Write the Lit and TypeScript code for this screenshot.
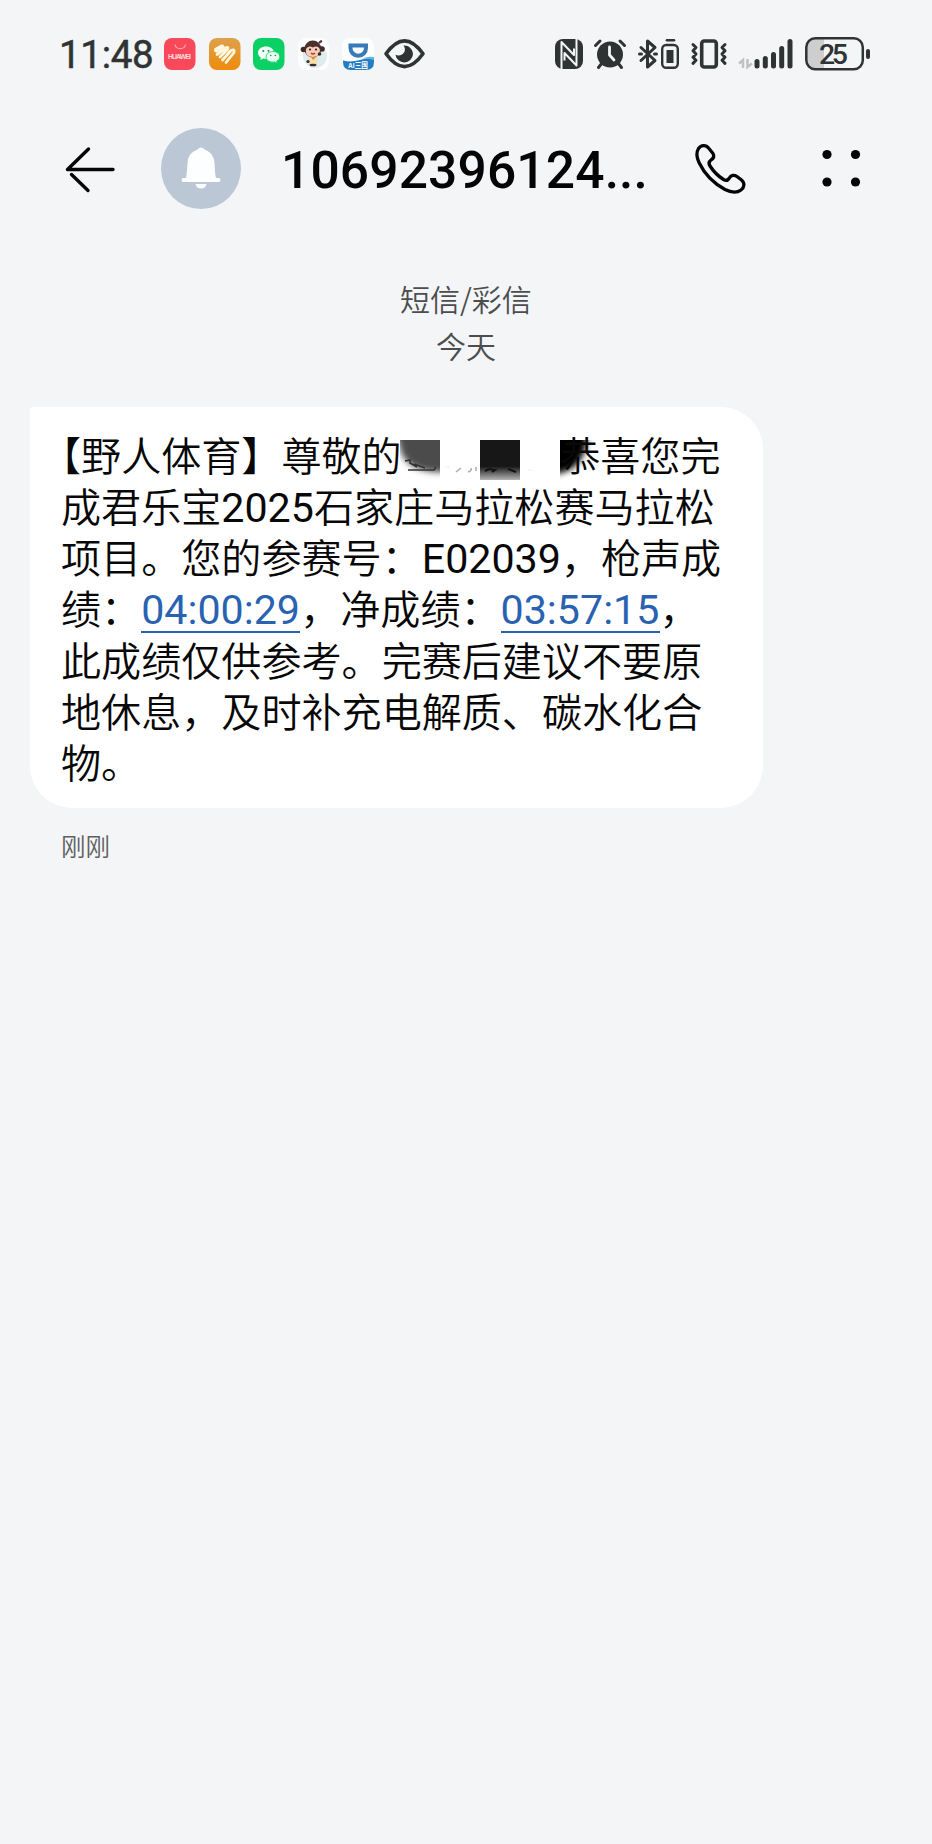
import { LitElement, html, css, svg } from "lit";
import { customElement } from "lit/decorators.js";

const INK = "#303334";

@customElement("status-bar")
class StatusBar extends LitElement {
  static styles = css`
    :host { display: flex; justify-content: space-between; height: 109px; padding: 0 62px 0 59px; box-sizing: border-box; color: #303334; }
    .group { display: flex; align-items: center; height: 108px; }
    .time { font: 400 38.5px/44px Roboto, sans-serif; width: 105px; letter-spacing: -0.3px; padding-top: 2px; -webkit-text-stroke: 0.5px #303334; }
    .apps { display: flex; gap: 12.5px; }
    svg { display: block; flex: none; overflow: visible; }
    .eye { margin-left: 10px; }
    .nfc { margin-right: 11px; }
    .alarm { margin-right: 12px; }
    .bt { margin-right: 11px; }
    .vib { margin-right: 12px; }
    .sig { margin-right: 12px; }
    .level { font: 500 28.5px Roboto, sans-serif; fill: #303334; }
    .tiny { font: 700 7px "Liberation Sans", sans-serif; fill: #ffd9d9; }
    .ai { font: 700 8px "Liberation Sans", "Noto Sans CJK SC", sans-serif; fill: #fff; }
  `;
  render() {
    return html`
      <div class="group">
        <div class="time">11:48</div>
        <div class="apps">
          <svg width="32" height="32" viewBox="0 0 32 32">
            <rect width="31.5" height="32" rx="8" fill="#f9485a" />
            <path d="M11 6.500c1 5.500 9.500 5.500 10.500 0" fill="none" stroke="#ffa6ac" stroke-width="1.200" />
            <text class="tiny" x="4" y="20.500" textLength="23">HUAWEI</text>
          </svg>
          <svg width="32" height="32" viewBox="0 0 32 32">
            <defs><linearGradient id="o" x1="0" y1="0" x2="0" y2="1"><stop offset="0" stop-color="#dca24c" /><stop offset="1" stop-color="#f08a0c" /></linearGradient></defs>
            <rect width="31.5" height="32" rx="8" fill="url(#o)" />
            <g fill="none" stroke="#fff8df" stroke-linecap="round" stroke-linejoin="round">
              <path d="M7.500 12L13 9" stroke-width="5" />
              <path d="M8 16.500L17.500 9.500Q20 9 18.500 11.500L11 19" stroke-width="2.800" />
              <path d="M13.500 22L22 12.500Q26 10.500 25 14.500L17 24.500" stroke-width="2.800" />
            </g>
          </svg>
          <svg width="32" height="32" viewBox="0 0 32 32">
            <rect width="31.5" height="32" rx="8" fill="#0bd066" />
            <path d="M13 8.500c-4.500 0-8 2.700-8 6.200 0 2 1.100 3.700 2.900 4.900l-.6 2.400 2.900-1.500c5 1.500 10.800-1 10.800-5.800 0-3.500-3.500-6.200-8-6.200z" fill="#f5fff8" />
            <path d="M20 13.500c-4 0-7 2.400-7 5.400 0 3.700 4.500 6 8.700 5l2.500 1.300-.5-2.100c1.900-1.100 3.100-2.500 3.100-4.200 0-3-3-5.400-6.800-5.400z" fill="#eafff2" stroke="#0bd066" stroke-width=".8" />
            <g fill="#198c51"><circle cx="10.300" cy="13" r="1" /><circle cx="15.500" cy="12.700" r="1" /><circle cx="17.800" cy="17.500" r=".8" /><circle cx="22.300" cy="17.500" r=".8" /></g>
          </svg>
          <svg width="32" height="32" viewBox="0 0 32 32">
            <rect width="31" height="32" rx="8" fill="#fcfdfd" />
            <circle cx="17" cy="18" r="12" fill="#dfecef" />
            <circle cx="5.500" cy="11.500" r="2.800" fill="#402a27" /><circle cx="24" cy="11" r="2.800" fill="#402a27" />
            <circle cx="14.800" cy="11" r="8.500" fill="#4c302b" />
            <path d="M21 5q3-3 2-1" stroke="#4c302b" stroke-width="2" />
            <path d="M8 11q3-4 6.800-1.500 4.500-2.500 7 1.500 1 8-7 8t-6.800-8z" fill="#f8cdb7" />
            <g fill="#29201f"><circle cx="12" cy="11.500" r="1.100" /><circle cx="18" cy="11.500" r="1.100" /></g>
            <path d="M13 15q2 2 4 0" stroke="#b43b34" stroke-width="1.400" fill="none" />
            <path d="M10 19h10l-1 7h-8z" fill="#f4dfad" /><path d="M13 19l2 3 3-3" fill="#d88a38" />
            <g fill="#3b2b29"><circle cx="10" cy="23.500" r="1.600" /><circle cx="21.500" cy="16" r="1.800" /><ellipse cx="15" cy="27" rx="3.500" ry="1.300" /></g>
          </svg>
          <svg width="32" height="32" viewBox="0 0 32 32">
            <rect width="32" height="32" rx="8" fill="#fcfdfe" />
            <path d="M8.500 7.500h15.500v2.500a7.700 7.700 0 0 1-15.500 0z" fill="none" stroke="#3a79b8" stroke-width="4" />
            <path d="M1 22.500q8 2 17-.5 8-2.500 14-2v4q0 8-8 8H9q-8 0-8-8z" fill="#247cc3" />
            <path d="M20 20.500q6-2.500 12-1.500v3q-6-2-12-1.500z" fill="#65b5e2" />
            <text class="ai" x="6" y="30" textLength="20" lengthAdjust="spacingAndGlyphs">AI三国</text>
          </svg>
        </div>
        <svg class="eye" width="41" height="30" viewBox="0 0 41 30">
          <path d="M2 14.800Q20.500-11 39 14.800 20.500 40.500 2 14.800z" fill="none" stroke="${INK}" stroke-width="3.600" stroke-linejoin="round" />
          <path d="M19.500 6.500c4.500-.5 9.500 3 9.500 8.800a8.800 8.800 0 0 1-17.500.5c3 1.500 7.500.5 9-3 .8-2.200.5-4.500-1-6.300z" fill="${INK}" />
        </svg>
      </div>
      <div class="group">
        <svg class="nfc" width="28" height="30" viewBox="0 0 28 30">
          <rect width="28" height="30" rx="8" fill="${INK}" />
          <g fill="none" stroke="#f3f5f7" stroke-width="2" stroke-linejoin="round">
            <path d="M6.500 30V3L19 16V9.500" /><path d="M21.500 0v26.500L9.500 14v7.500" />
          </g>
        </svg>
        <svg class="alarm" width="32" height="30" viewBox="0 0 32 30">
          <circle cx="16" cy="15.500" r="13" fill="${INK}" />
          <path d="M1.500 6.500L6 2M30.500 6.500L26 2M8 24l-3.500 4.500M24 24l3.500 4.500" stroke="${INK}" stroke-width="3" stroke-linecap="round" />
          <path d="M15.500 8v8l4.500 5" fill="none" stroke="#f3f5f7" stroke-width="2.800" stroke-linecap="round" stroke-linejoin="round" />
        </svg>
        <svg class="bt" width="42" height="30" viewBox="0 0 42 30">
          <path d="M3 8.500L17 21.500 9.500 28V2L17 8.500 3 21.500" fill="none" stroke="${INK}" stroke-width="3" stroke-linejoin="round" stroke-linecap="round" />
          <path d="M1.500 15h2M16.500 15h2" stroke="${INK}" stroke-width="3" stroke-linecap="round" />
          <rect x="24.200" y="6" width="15.600" height="22.700" rx="4" fill="none" stroke="${INK}" stroke-width="2.400" />
          <path d="M29 1.200h7" stroke="${INK}" stroke-width="2.600" stroke-linecap="round" />
          <rect x="28.500" y="11" width="7" height="13" fill="${INK}" />
        </svg>
        <svg class="vib" width="36" height="30" viewBox="0 0 36 30">
          <rect x="10.700" y="2" width="14.600" height="26" rx="2.500" fill="none" stroke="${INK}" stroke-width="3.600" />
          <path d="M2 5.500l3 3-3 3.200 3 3.300-3 3.200 3 3-3 3.200M34 5.500l-3 3 3 3.200-3 3.300 3 3.200-3 3 3 3.200" fill="none" stroke="${INK}" stroke-width="3" stroke-linejoin="round" stroke-linecap="round" />
        </svg>
        <svg class="sig" width="54" height="30" viewBox="0 0 54 30">
          <path d="M0 24.500l4-3.500v8M8.500 20v8l4.500-3.500" fill="none" stroke="#bfc1c2" stroke-width="2.500" />
          ${[[18, 20], [26.3, 17], [34.5, 13], [42.7, 7], [51, 0]].map(([x, y]) => svg`<line x1=${x} x2=${x} y1=${y + 2.5} y2="27" stroke=${INK} stroke-width="5" stroke-linecap="round" />`)}
        </svg>
        <svg width="65" height="34" viewBox="0 0 65 34">
          <path d="M10 1.500h9V32h-9q-8.500 0-8.500-8.500V10q0-8.500 8.500-8.500z" fill="#cccecf" />
          <rect x="1.300" y="1.300" width="56.500" height="31" rx="9" fill="none" stroke="${INK}" stroke-width="2.500" />
          <rect x="61" y="12" width="4" height="10" rx="2" fill="${INK}" />
          <text class="level" x="14" y="27" textLength="29">25</text>
        </svg>
      </div>
    `;
  }
}

@customElement("thread-header")
class ThreadHeader extends LitElement {
  static styles = css`
    :host { display: flex; align-items: center; height: 119px; padding: 0 66px 0 65px; box-sizing: border-box; }
    svg { display: block; flex: none; overflow: visible; }
    .avatar { margin-left: 46px; }
    .number { margin-left: 40px; width: 414px; flex: none; font: 500 51.5px/60px Roboto, sans-serif; letter-spacing: 0.15px; color: #050505; white-space: nowrap; padding-top: 4px; }
    .more { margin-left: 75px; }
  `;
  render() {
    return html`
      <svg width="50" height="46" viewBox="0 0 50 46">
        <path d="M23.500 3L2.500 23.500H48M6.500 28.500L23 44.500" fill="none" stroke="#050505" stroke-width="3.400" stroke-linejoin="round" stroke-linecap="round" />
      </svg>
      <svg class="avatar" width="80" height="81" viewBox="0 0 80 81">
        <ellipse cx="40" cy="40.500" rx="40" ry="40.500" fill="#bbc7d4" />
        <path d="M40 19.500c2 0 2.800 1.500 4.500 2.500 6 2.500 8.500 6.500 9 13 .5 7 .5 10 1.500 15h2.500q2 0 2 2t-2 2h-35q-2 0-2-2t2-2H25c1-5 1-8 1.500-15 .5-6.500 3-10.500 9-13 1.700-1 2.500-2.500 4.500-2.500z" fill="#fcfeff" />
        <path d="M34.500 56h11q-1 4.500-5.500 4.500T34.500 56z" fill="#fcfeff" />
      </svg>
      <div class="number">10692396124...</div>
      <svg width="50" height="50" viewBox="0 0 50 50">
        <path d="M3.500 4.500C6 .8 11 .5 13.500 4L18 9.500C19.500 12 18.500 14.500 15.500 16.500 13.500 18 13.500 19.500 15 22 18.500 27.500 23 32 28.500 35.500 31 37 32.500 36.800 34 34.500 36 31 39 30.500 42 32.500L46.500 36C50 39 49.500 43.500 46 46 41.500 49.500 36 48.500 30 45.500 19 39.500 9.500 30 4 18.500 1.500 13 1 8.500 3.500 4.500z" fill="none" stroke="#050505" stroke-width="3.300" stroke-linejoin="round" />
      </svg>
      <svg class="more" width="46" height="40" viewBox="0 0 46 40">
        <g fill="#050505"><circle cx="7" cy="5.500" r="4.600" /><circle cx="35.500" cy="5.500" r="4.600" /><circle cx="7" cy="33" r="4.600" /><circle cx="35.500" cy="33" r="4.600" /></g>
      </svg>
    `;
  }
}

@customElement("message-bubble")
class MessageBubble extends LitElement {
  static styles = css`
    :host { display: block; width: 733px; height: 401px; box-sizing: border-box; padding: 20.5px 0 0 31px; background: #fff; border-radius: 3px 42px 42px 42px; color: #080808; font: 350 40.1px/51.3px "Noto Sans CJK SC", sans-serif; text-spacing-trim: space-all; }
    .line { height: 51.3px; white-space: nowrap; }
    .open { font-feature-settings: "halt"; }
    .num { font-family: Roboto, sans-serif; font-size: 41.2px; line-height: 1; font-weight: 400; }
    .link { display: inline-block; color: #2a62b2; box-shadow: 0 2px 0 #2a62b2; height: 45px; line-height: 48px; width: 159px; }
    .mask { display: inline-block; width: 160px; height: 40px; margin-left: -1.500px; vertical-align: -9px; overflow: visible; }
  `;
  render() {
    return html`
      <div class="line"><span class="open">【</span>野人体育】尊敬的<svg class="mask" viewBox="0 0 160 40">
          <defs>
            <filter id="soft" x="-30%" y="-30%" width="160%" height="160%"><feGaussianBlur stdDeviation="3" /></filter>
            <clipPath id="a"><rect width="40" height="40" /></clipPath>
            <clipPath id="c"><rect x="160" width="50" height="40" /></clipPath>
            <linearGradient id="fade" x1="0" y1="0" x2="0" y2="1"><stop offset=".66" stop-color="#171717" /><stop offset="1" stop-color="#b5b5b5" /></linearGradient>
          </defs>
          <g clip-path="url(#a)"><path d="M-5-10H50V32H34Q4 29 0 8z" fill="#4b4b4b" filter="url(#soft)" /></g>
          <path d="M5 21l5-1v3l7 4M8 30h26l2-3M14 24l11 4" stroke="#333" stroke-width="1.500" fill="none" />
          <rect x="80" width="40" height="40" fill="url(#fade)" />
          <path d="M85 31l4-2 6 1-3 2M108 29l8 3" stroke="#111" stroke-width="2" fill="none" />
          <path d="M56 32l5-4M68 32q4-1 3-4M76 31v-4" stroke="#aaa" stroke-width="1.500" fill="none" />
          <path d="M45 27h5M128 30h5" stroke="#eee" />
          <g clip-path="url(#c)"><path d="M145-10h42q2 45-42 45z" fill="#000" filter="url(#soft)" /></g>
        </svg>恭喜您完</div>
      <div class="line">成君乐宝<span class="num">2025</span>石家庄马拉松赛马拉松</div>
      <div class="line">项目。您的参赛号：<span class="num">E02039</span>，枪声成</div>
      <div class="line">绩：<span class="num link">04:00:29</span>，净成绩：<span class="num link">03:57:15</span>，</div>
      <div class="line">此成绩仅供参考。完赛后建议不要原</div>
      <div class="line">地休息，及时补充电解质、碳水化合</div>
      <div class="line">物。</div>
    `;
  }
}

@customElement("app-root")
class AppRoot extends LitElement {
  static styles = css`
    :host { display: flex; flex-direction: column; width: 932px; height: 1844px; background: #f3f5f7; overflow: hidden; font-family: "Noto Sans CJK SC", sans-serif; }
    .stamp { padding-top: 47px; height: 132px; text-align: center; font-size: 30px; line-height: 46.5px; color: #4b4d4e; font-weight: 350; }
    .stamp, .thread { flex: none; box-sizing: content-box; }
    .stamp { height: 132px; }
    .thread { padding-left: 30px; margin-top: 0; }
    .ago { margin: 21px 0 0 31px; font-size: 24.5px; line-height: 34px; color: #5d5f60; font-weight: 350; }
  `;
  render() {
    return html`
      <status-bar></status-bar>
      <thread-header></thread-header>
      <div class="stamp"><div>短信/彩信</div><div>今天</div></div>
      <div class="thread">
        <message-bubble></message-bubble>
        <div class="ago">刚刚</div>
      </div>
    `;
  }
}
